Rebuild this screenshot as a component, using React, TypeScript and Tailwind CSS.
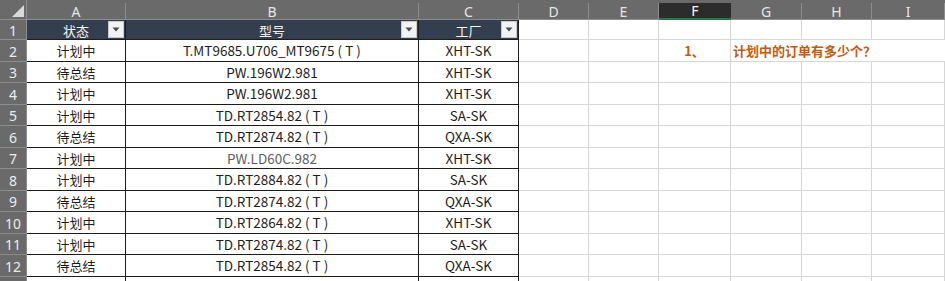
const columns = ['A', 'B', 'C', 'D', 'E', 'F', 'G', 'H', 'I'];

const rows: [string, string, string][] = [
  ['计划中', 'T.MT9685.U706_MT9675 ( T )', 'XHT-SK'],
  ['待总结', 'PW.196W2.981', 'XHT-SK'],
  ['计划中', 'PW.196W2.981', 'XHT-SK'],
  ['计划中', 'TD.RT2854.82 ( T )', 'SA-SK'],
  ['待总结', 'TD.RT2874.82 ( T )', 'QXA-SK'],
  ['计划中', 'PW.LD60C.982', 'XHT-SK'],
  ['计划中', 'TD.RT2884.82 ( T )', 'SA-SK'],
  ['待总结', 'TD.RT2874.82 ( T )', 'QXA-SK'],
  ['计划中', 'TD.RT2864.82 ( T )', 'XHT-SK'],
  ['计划中', 'TD.RT2874.82 ( T )', 'SA-SK'],
  ['待总结', 'TD.RT2854.82 ( T )', 'QXA-SK'],
];

function FilterButton() {
  return (
    <span className="justify-self-end self-center mr-px h-[17px] w-[16px] flex items-center justify-center bg-[#f2f2f2] border border-[#c9c9c9] [grid-area:1/1]">
      <svg width="8" height="5" viewBox="0 0 8 5">
        <path d="M0.5 0.5 L7.5 0.5 L4 4.5 Z" fill="#4a4a4a" />
      </svg>
    </span>
  );
}

function HeaderCell({ label }: { label: string }) {
  return (
    <div className="grid bg-[#333f4f] border-r border-b border-[#1c1c1c] text-[#f2f2f2] text-[13px]">
      <span className="[grid-area:1/1] self-center justify-self-center pt-px">{label}</span>
      <FilterButton />
    </div>
  );
}

function RowHeader({ n }: { n?: number }) {
  return (
    <div className="flex items-center justify-center pt-[3px] bg-[#6a6a6a] border-r border-b border-[#8d8d8d] text-[#ececec] font-['Noto_Sans',sans-serif] text-[14px]">
      {n}
    </div>
  );
}

function TableCell({
  children,
  muted = false,
  size = 'text-[13.5px]',
}: {
  children?: React.ReactNode;
  muted?: boolean;
  size?: string;
}) {
  return (
    <div
      className={`flex items-center justify-center pt-px whitespace-nowrap bg-white border-r border-b border-[#1c1c1c] ${size} ${
        muted ? 'text-[#5e5e5e]' : 'text-[#1e1e1e]'
      }`}
    >
      {children}
    </div>
  );
}

function GridCell({ children }: { children?: React.ReactNode }) {
  return <div className="bg-white border-r border-b border-[#d6d6d6]">{children}</div>;
}

export default function App() {
  return (
    <div className="w-[945px] h-[281px] overflow-hidden bg-white font-['Noto_Sans_CJK_SC',sans-serif] leading-none">
      <div className="grid grid-cols-[27px_99px_293px_100px_70px_70px_72px_71px_70px_1fr] grid-rows-[20px_20px_repeat(11,21.5px)_22px]">
        {/* column letters */}
        <div className="flex items-end justify-end pr-[2px] pb-[2px] bg-[#6a6a6a] border-r border-b border-[#8d8d8d]">
          <svg width="12" height="12" viewBox="0 0 12 12">
            <path d="M12 0 L12 12 L0 12 Z" fill="#d9d9d9" />
          </svg>
        </div>
        {columns.map((c) => (
          <div key={c} className="flex pt-[3px] bg-[#6a6a6a] font-['Noto_Sans',sans-serif] text-[14px]">
            <div
              className={`w-full h-full flex items-center justify-center pt-px ${
                c === 'F'
                  ? 'bg-[#2c2c2c] border-b-2 border-[#1f7a46] text-white'
                  : 'border-r border-b border-[#8d8d8d] text-[#e6e6e6]'
              }`}
            >
              {c}
            </div>
          </div>
        ))}

        {/* row 1 */}
        <RowHeader n={1} />
        <HeaderCell label="状态" />
        <HeaderCell label="型号" />
        <HeaderCell label="工厂" />
        {columns.slice(3).map((c) => (
          <GridCell key={c} />
        ))}

        {rows.map((r, i) => (
          <div key={i} className="contents">
            <RowHeader n={i + 2} />
            <TableCell size="text-[13px]">{r[0]}</TableCell>
            <TableCell muted={r[1] === 'PW.LD60C.982'}>{r[1]}</TableCell>
            <TableCell>{r[2]}</TableCell>
            <GridCell />
            <GridCell />
            {i === 0 ? (
              <>
                <div className="flex items-center justify-center pt-px bg-white border-r border-b border-[#d6d6d6] font-bold text-[13px] text-[#c55a11]">
                  1、
                </div>
                <div className="col-span-3 flex items-center pl-[2px] pt-px bg-white border-b border-[#d6d6d6] font-bold text-[13px] text-[#c55a11] whitespace-nowrap">
                  计划中的订单有多少个？
                </div>
              </>
            ) : (
              <>
                <GridCell />
                <GridCell />
                <GridCell />
                <GridCell />
              </>
            )}
          </div>
        ))}

        {/* row 13, cut off by the window */}
        <RowHeader />
        <TableCell />
        <TableCell />
        <TableCell />
        {columns.slice(3).map((c) => (
          <GridCell key={c} />
        ))}
      </div>
    </div>
  );
}
